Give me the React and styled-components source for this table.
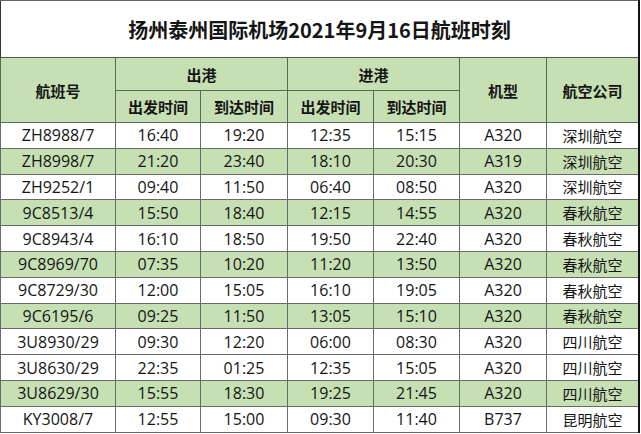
import React from 'react';
import styled, { createGlobalStyle } from 'styled-components';

const GlobalStyle = createGlobalStyle`
  html, body {
    margin: 0;
    padding: 0;
    background: #ffffff;
  }
  body {
    font-family: "Open Sans", "Noto Sans CJK SC", sans-serif;
    overflow: hidden;
  }
`;

const Table = styled.table`
  width: 640px;
  table-layout: fixed;
  border-collapse: collapse;
  border-left: 1px solid #333;
  border-right: 2px solid #111;
  border-top: 1px solid #666;
  border-bottom: 1px solid #333;
  color: #151515;
`;

const TitleCell = styled.th`
  height: 56px;
  padding: 0;
  font-family: "Noto Sans CJK SC", sans-serif;
  font-size: 20px;
  font-weight: 700;
  text-align: center;
  background: #ffffff;
  border-bottom: 1px solid #555;
  border-right: 2px solid #111;
`;

const HeadCell = styled.th`
  height: ${p => p.$h || 31}px;
  padding: 0;
  font-family: "Noto Sans CJK SC", sans-serif;
  font-size: 15px;
  font-weight: 700;
  text-align: center;
  background: #c6e0b4;
  border: 1px solid #5a6b55;
  border-right: ${p => (p.$last ? '2px solid #111' : '1px solid #5a6b55')};
`;

const Row = styled.tr`
  height: 25.8px;
  background: ${p => (p.$green ? '#c6e0b4' : '#ffffff')};
`;

const Cell = styled.td`
  padding: 0;
  font-size: 16px;
  text-align: center;
  line-height: 1;
  border: 1px solid #6a6a6a;
  border-left-color: ${p => (p.$soft ? '#9a9a9a' : '#6a6a6a')};
  white-space: nowrap;
`;

const CnCell = styled(Cell)`
  font-family: "Noto Sans CJK SC", sans-serif;
  font-size: 15px;
  border-right: 2px solid #111;
`;

const flights = [
  ['ZH8988/7', '16:40', '19:20', '12:35', '15:15', 'A320', '深圳航空', false],
  ['ZH8998/7', '21:20', '23:40', '18:10', '20:30', 'A319', '深圳航空', true],
  ['ZH9252/1', '09:40', '11:50', '06:40', '08:50', 'A320', '深圳航空', false],
  ['9C8513/4', '15:50', '18:40', '12:15', '14:55', 'A320', '春秋航空', true],
  ['9C8943/4', '16:10', '18:50', '19:50', '22:40', 'A320', '春秋航空', false],
  ['9C8969/70', '07:35', '10:20', '11:20', '13:50', 'A320', '春秋航空', true],
  ['9C8729/30', '12:00', '15:05', '16:10', '19:05', 'A320', '春秋航空', false],
  ['9C6195/6', '09:25', '11:50', '13:05', '15:10', 'A320', '春秋航空', true],
  ['3U8930/29', '09:30', '12:20', '06:00', '08:30', 'A320', '四川航空', false],
  ['3U8630/29', '22:35', '01:25', '12:35', '15:05', 'A320', '四川航空', false],
  ['3U8629/30', '15:55', '18:30', '19:25', '21:45', 'A320', '四川航空', true],
  ['KY3008/7', '12:55', '15:00', '09:30', '11:40', 'B737', '昆明航空', false],
];

export default function App() {
  return (
    <>
      <GlobalStyle />
      <Table>
        <colgroup>
          <col style={{ width: 115 }} />
          <col style={{ width: 85 }} />
          <col style={{ width: 87 }} />
          <col style={{ width: 86 }} />
          <col style={{ width: 86 }} />
          <col style={{ width: 87 }} />
          <col />
        </colgroup>
        <thead>
          <tr>
            <TitleCell colSpan={7}>扬州泰州国际机场2021年9月16日航班时刻</TitleCell>
          </tr>
          <tr>
            <HeadCell rowSpan={2}>航班号</HeadCell>
            <HeadCell colSpan={2} $h={32}>出港</HeadCell>
            <HeadCell colSpan={2} $h={32}>进港</HeadCell>
            <HeadCell rowSpan={2}>机型</HeadCell>
            <HeadCell rowSpan={2} $last>航空公司</HeadCell>
          </tr>
          <tr>
            <HeadCell>出发时间</HeadCell>
            <HeadCell>到达时间</HeadCell>
            <HeadCell>出发时间</HeadCell>
            <HeadCell>到达时间</HeadCell>
          </tr>
        </thead>
        <tbody>
          {flights.map(f => (
            <Row key={f[0]} $green={f[7]}>
              <Cell>{f[0]}</Cell>
              <Cell>{f[1]}</Cell>
              <Cell $soft>{f[2]}</Cell>
              <Cell $soft>{f[3]}</Cell>
              <Cell $soft>{f[4]}</Cell>
              <Cell>{f[5]}</Cell>
              <CnCell>{f[6]}</CnCell>
            </Row>
          ))}
        </tbody>
      </Table>
    </>
  );
}
